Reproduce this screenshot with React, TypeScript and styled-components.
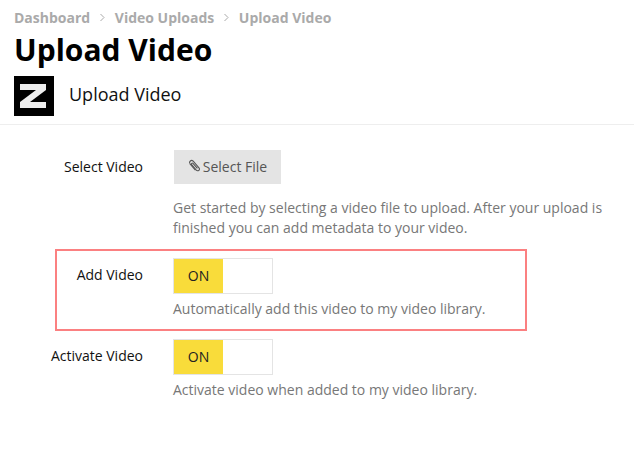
import React from 'react'
import styled, { createGlobalStyle } from 'styled-components'

const Global = createGlobalStyle`
html, body { margin: 0; padding: 0; background: #fff; }
body { font-family: "Open Sans", "Liberation Sans", sans-serif; }
`;

const Page = styled.div`
width: 634px;
height: 472px;
overflow: hidden;
`;

const Header = styled.header`
padding: 7px 14px 0;
border-bottom: 1px solid #eee;
height: 117px;
`;

const Crumbs = styled.nav`
display: flex;
align-items: center;
height: 20px;
font-size: 14px;
font-weight: 700;
color: #aaa;
`;

const CrumbSep = styled.svg`
width: 7px;
height: 9px;
margin: 1px 8.8px 0;
`;

const Title = styled.h1`
margin: 2px 0 0;
font-size: 30px;
line-height: 41px;
font-weight: 700;
color: #000;
`;

const Brand = styled.div`
display: flex;
align-items: center;
gap: 15px;
margin-top: 6px;
font-size: 18px;
color: #111;
`;

const BrandName = styled.span`
line-height: 36px;
align-self: flex-start;
`;

const Logo = styled.svg`
width: 40px;
height: 40px;
display: block;
`;

const Form = styled.div`
display: flex;
flex-direction: column;
padding-top: 25px;
`;

const Row = styled.div<{ $highlight?: boolean }>`
display: grid;
grid-template-columns: 143px 1fr;
column-gap: 30px;
align-items: start;
box-sizing: border-box;
${p => p.$highlight ? `
  width: 472px;
  height: 82px;
  margin: 11px 0 8px 55px;
  border: 2px solid #fb8081;
  padding-top: 7px;
  grid-template-columns: 86px 1fr;
` : ''}
`;

const Label = styled.label`
font-size: 14px;
line-height: 20px;
color: #111;
text-align: right;
padding-top: 7px;
`;

const Control = styled.div`
display: flex;
flex-direction: column;
align-items: flex-start;
min-width: 0;
`;

const FileButton = styled.button`
display: flex;
align-items: center;
justify-content: center;
gap: 2px;
width: 107px;
height: 34px;
margin-left: 1px;
border: 0;
padding: 0 0 2px;
background: #e4e4e4;
color: #555;
font-family: inherit;
font-size: 14px;
`;

const Help = styled.p<{ $wide?: boolean }>`
margin: ${p => p.$wide ? '14px 0 0' : '5px 0 0'};
font-size: 14px;
line-height: 20px;
color: #777;
width: 440px;
`;

const Toggle = styled.div`
display: flex;
box-sizing: border-box;
width: 100px;
height: 36px;
border: 1px solid #e4e4e4;
background: #fff;
`;

const ToggleOn = styled.span`
display: flex;
align-items: center;
justify-content: center;
box-sizing: border-box;
width: 49px;
padding-bottom: 2px;
background: #f9dc3a;
color: #222;
font-size: 14px;
`;

const Clip = () => (
  <svg width="13" height="14" viewBox="0 0 13 14" fill="none" stroke="#555" strokeWidth="1.1">
    <path d="M1.8 4.6 a2.1 2.1 0 0 1 3.2 -2.6 L11 8.8 a1.8 1.8 0 0 1 -2.7 2.4 L3.6 5.6 a0.9 0.9 0 0 1 1.4 -1.2 L9.4 9.4" />
    <path d="M1.8 4.6 L7.4 11.2" />
  </svg>
);

const Sep = () => (
  <CrumbSep viewBox="0 0 7 9" fill="none" stroke="#aaa" strokeWidth="1">
    <path d="M1.5 1 L5 4.5 L1.5 8" />
  </CrumbSep>
);

const App = () => {
  return (
    <Page>
      <Global />
      <Header>
        <Crumbs>
          Dashboard<Sep />Video Uploads<Sep />Upload Video
        </Crumbs>
        <Title>Upload Video</Title>
        <Brand>
          <Logo viewBox="0 0 40 40">
            <rect width="40" height="40" fill="#000" />
            <path d="M6 8 H32 V14 L16 26 H32 V32 H6 V26 L22 14 H6 Z" fill="#eee" />
          </Logo>
          <BrandName>Upload Video</BrandName>
        </Brand>
      </Header>
      <Form>
        <Row>
          <Label>Select Video</Label>
          <Control>
            <FileButton><Clip />Select File</FileButton>
            <Help $wide>Get started by selecting a video file to upload. After your upload is finished you can add metadata to your video.</Help>
          </Control>
        </Row>
        <Row $highlight>
          <Label>Add Video</Label>
          <Control>
            <Toggle><ToggleOn>ON</ToggleOn></Toggle>
            <Help>Automatically add this video to my video library.</Help>
          </Control>
        </Row>
        <Row>
          <Label>Activate Video</Label>
          <Control>
            <Toggle><ToggleOn>ON</ToggleOn></Toggle>
            <Help>Activate video when added to my video library.</Help>
          </Control>
        </Row>
      </Form>
    </Page>
  )
}

export default App
